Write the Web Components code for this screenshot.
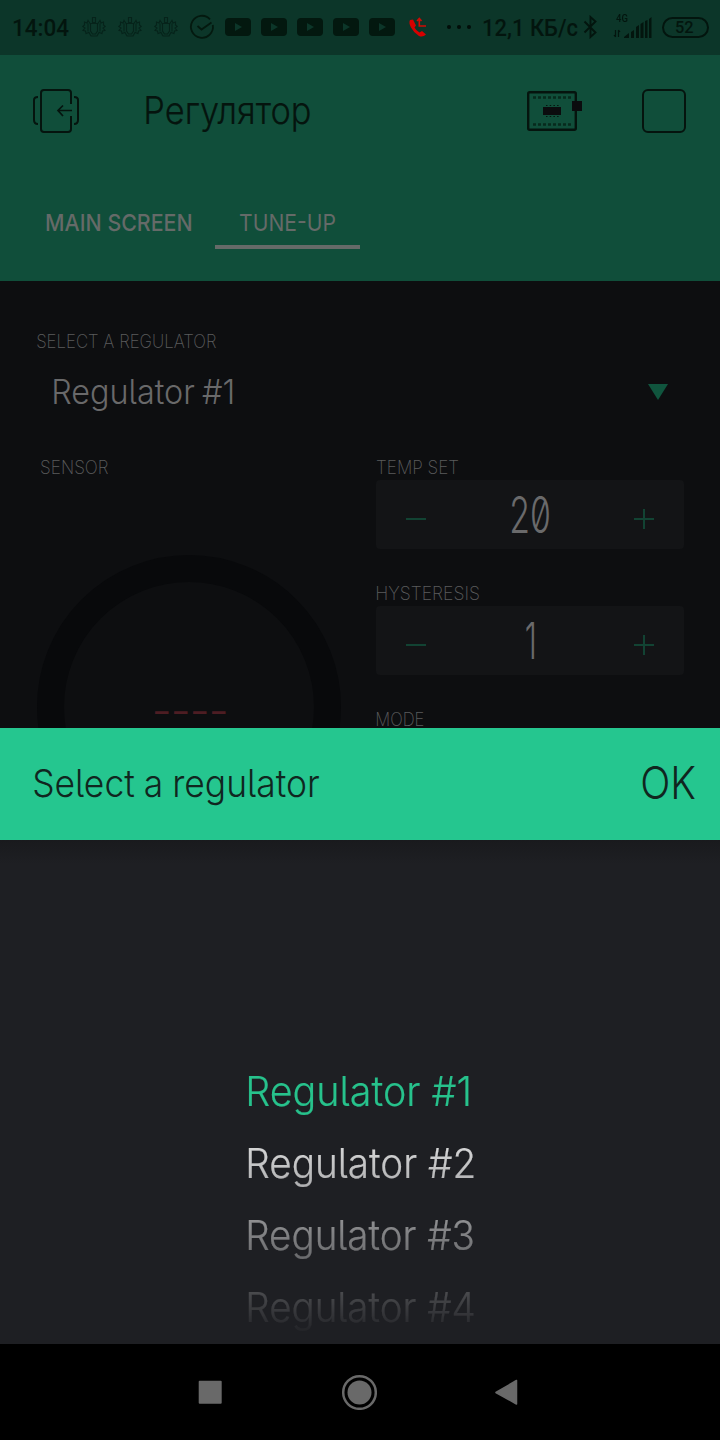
<!DOCTYPE html>
<html lang="en">
<head>
<meta charset="utf-8">
<title>Регулятор</title>
<style>
html,body{margin:0;background:#000}
body{width:720px;height:1440px;overflow:hidden;font-family:Inter,"Noto Sans",sans-serif}
</style>
</head>
<body>
<app-screen></app-screen>
<script>
const define=(name,html,setup)=>customElements.define(name,class extends HTMLElement{
  connectedCallback(){
    if(this.shadowRoot)return;
    const t=document.createElement('template');
    t.innerHTML=html;
    this.attachShadow({mode:'open'}).append(t.content.cloneNode(true));
    if(setup)setup(this,this.shadowRoot);
  }
});

// A single line of text whose visible width equals its w attribute.
const pen=document.createElement('canvas').getContext('2d');
customElements.define('fit-text',class extends HTMLElement{
  connectedCallback(){
    if(this.shadowRoot)return;
    const r=this.attachShadow({mode:'open'});
    r.innerHTML=`<style>:host{display:block;flex:none;white-space:nowrap;line-height:1.2}
    span{display:block;width:max-content;transform-origin:0 50%}</style><span></span>`;
    const s=r.querySelector('span');
    s.textContent=this.getAttribute('text');
    const w=+this.getAttribute('w');
    this.style.width=w+'px';
    const c=getComputedStyle(s);
    pen.font=`${c.fontWeight} ${c.fontSize} ${c.fontFamily}`;
    const m=pen.measureText(s.textContent);
    const lb=-m.actualBoundingBoxLeft,rb=m.width-m.actualBoundingBoxRight;
    const k=w/(s.getBoundingClientRect().width-lb-rb);
    s.style.transform=`translateX(${-lb*k}px) scaleX(${k})`;
  }
});

define('notify-icon',`<style>:host{display:flex;flex:none;width:24px;height:24px;align-items:center;justify-content:center}svg{overflow:visible;flex:none}</style>`,(h,r)=>{
  const art={
    bug:`<svg width="24" height="24" viewBox="0 0 24 24" fill="none" stroke="#06231a" stroke-width="1.1"><path d="M10.500 2.500h3v5h-3zM8.500 8.500h7v7.500l-2 3h-3l-2-3z"/><path d="M8.500 9 6 5.500 5 8 2.500 7v3L.8 11.500 3 13l-2 2.500 2.500.5.5 2.500 3-1 2 3.500h6l2-3.500 3 1 .5-2.500 2.500-.5-2-2.500 2.200-1.500L21.500 10V7L19 8l-1-2.500L15.500 9M6 8.500v8M18 8.500v8"/></svg>`,
    check:`<svg width="24" height="24" viewBox="0 0 24 24" fill="none" stroke="#04190f" stroke-width="1.8"><path d="M20 4.300A11 11 0 1 0 22.800 10M7.500 11l4 3.500L21.500 7.500"/></svg>`,
    video:`<svg width="26" height="18" viewBox="0 0 26 18"><rect width="26" height="18" rx="4" fill="#03180f"/><path d="M10 5v8l7-4z" fill="#0c3629"/></svg>`,
    call:`<svg width="18" height="19" viewBox="0 0 18 19"><path d="M1 2Q-.5 5 2 9.500 5 15 10 18q4 1.500 7-1.500l-4-3.500-2.500 1.500Q7 12.500 5.500 9.500L7 7.500 4 1.500z" fill="#d70000"/><path d="M10.300 1v7H17M8 3l2.300-2.500L12.500 3" fill="none" stroke="#d00b05" stroke-width="1.600"/></svg>`,
    dots:`<svg width="24" height="4" viewBox="0 0 24 4" fill="#020e09"><circle cx="2" cy="2" r="2"/><circle cx="12" cy="2" r="2"/><circle cx="22" cy="2" r="2"/></svg>`};
  r.innerHTML+=art[h.getAttribute('kind')];
});

define('status-bar',`<style>
:host{display:flex;box-sizing:border-box;height:55px;padding:0 11px 1px 13px;align-items:center;background:#0c3629;color:#03150e;font-family:Roboto,sans-serif;font-weight:500;font-size:23px}
.icons{display:flex;gap:12px;margin-left:13px}
.icons notify-icon:last-child{margin-left:5px}
.time,.speed{margin-top:3px}.speed{margin-left:12px}
svg{flex:none;display:block}
.bt{margin-left:5px}
.sig{display:grid;margin-left:15px;width:39px;height:22px}
.sig>*{grid-area:1/1}.sig fit-text{font-size:10px;margin:-3px 0 0 3px}
.bat{margin-left:10px;box-sizing:border-box;width:47px;height:21px;border:2px solid #03150e;border-radius:11px;display:flex;align-items:center;justify-content:center;font-size:17px}
.bat fit-text{margin-left:-1px}
</style>
<fit-text class="time" text="14:04" w="56"></fit-text>
<div class="icons"><notify-icon kind="bug"></notify-icon><notify-icon kind="bug"></notify-icon><notify-icon kind="bug"></notify-icon><notify-icon kind="check"></notify-icon><notify-icon kind="video"></notify-icon><notify-icon kind="video"></notify-icon><notify-icon kind="video"></notify-icon><notify-icon kind="video"></notify-icon><notify-icon kind="video"></notify-icon><notify-icon kind="call"></notify-icon><notify-icon kind="dots"></notify-icon></div>
<fit-text class="speed" text="12,1 КБ/с" w="95"></fit-text>
<svg class="bt" width="15" height="24" viewBox="0 0 15 24" fill="none" stroke="#03150e" stroke-width="1.900"><path d="M1.500 6.500l11 11L7.500 22V2l5 4.500-11 11"/></svg>
<div class="sig"><fit-text text="4G" w="12"></fit-text>
<svg width="39" height="22" viewBox="0 0 39 22"><path d="M2.500 14v7M5.500 21v-7M1 19l1.500 2M7 16l-1.500-2" stroke="#03150e" stroke-width="1.200" fill="none"/><path d="M11 22v-1l5-4v5zM18 22v-6l3-2v8zM23 22V11l3-2v13zM27.500 22V8l3-2v16zM32 22V5l2.500-1v18zM36 22V3l2.500-2v21z" fill="#03150e"/></svg></div>
<div class="bat"><fit-text text="52" w="18"></fit-text></div>`);

define('tab-item',`<style>
:host{display:flex;box-sizing:border-box;height:54px;justify-content:center;align-items:center;padding-top:6px;border-bottom:4px solid transparent;font-size:23.500px;font-weight:500;color:#656a68}
:host([active]){border-color:#656a68;font-weight:400}
</style><slot></slot>`);

define('app-header',`<style>
:host{display:flex;flex-direction:column;box-sizing:border-box;height:226px;background:#104e3a;color:#05140e}
.top{display:flex;align-items:center;height:112px;padding:0 34px 0 33px}
.title{font-size:38.500px;font-weight:300;margin-left:66.500px;margin-top:-1px;-webkit-text-stroke:.2px}
.chip{margin-left:217px}.stop{box-sizing:border-box;width:44px;height:44px;margin-left:59px;border:2px solid #05140e;border-radius:6px}
svg{display:block;flex:none}
.tabs{display:grid;grid-template-columns:193px 145px;margin-top:28px;padding-left:22px}
</style>
<div class="top">
<svg width="46" height="44" viewBox="0 0 46 44" fill="none" stroke="#05140e" stroke-width="2"><path d="M38 15V4q0-3-3-3H11Q8 1 8 4v36q0 3 3 3h24q3 0 3-3V27M5 8Q1 8 1 11v20q0 4 4 4M41 8q4 0 4 3v20q0 4-4 4"/><path stroke-width="1.700" d="M39 21.500H25m5-5-5 5 5 5.500"/></svg>
<fit-text class="title" text="Регулятор" w="164.5"></fit-text>
<svg class="chip" width="56" height="40" viewBox="0 0 56 40"><rect x="1.200" y="1.200" width="47.600" height="37.600" rx="1.500" fill="none" stroke="#05140e" stroke-width="2.400"/><path d="M6 6.500h38M6 33.500h38" stroke="#072a1d" stroke-width="2.600" stroke-dasharray="3 2"/><path d="M16 16h18v8H16zM45 10h10v10H45z" fill="#0b0c0e"/><path d="M19 14.500h13M19 25.500h13" stroke="#05140e" stroke-width="1.200" stroke-dasharray="1.500 2.200"/></svg>
<div class="stop"></div>
</div>
<div class="tabs">
<tab-item><fit-text text="MAIN SCREEN" w="145"></fit-text></tab-item><tab-item active><fit-text text="TUNE-UP" w="95"></fit-text></tab-item></div>`);

define('caption-text',`<style>:host{display:flex;align-items:center;height:26px;font-size:19.300px;font-weight:200;color:#5b5c5d;box-sizing:border-box;padding-top:.2px}::slotted(fit-text){line-height:15px}</style><slot></slot>`);

define('value-stepper',`<style>
:host{display:grid;grid-template-columns:80px 1fr 80px;align-items:center;justify-items:center;width:308px;height:69px;border-radius:4px;background:#131416}
::slotted(fit-text){font-size:50px;font-weight:300;color:#6a6a6b;font-feature-settings:"zero" 1;line-height:60px}
svg{margin-top:9px}</style>
<svg width="20" height="20"><path d="M0 10h20" stroke="#124333" stroke-width="2"/></svg>
<slot></slot>
<svg width="20" height="20"><path d="M0 10h20M10 0v20" stroke="#124333" stroke-width="2"/></svg>`);

define('sensor-gauge',`<style>
:host{display:flex;box-sizing:border-box;width:304px;height:304px;border-radius:50%;border:27px solid #08090b;justify-content:center;align-items:center;color:#4d1d23;font-size:24px;font-weight:700}
fit-text{line-height:14px;margin:9px 0 0 1px}
</style><fit-text text="----" w="72"></fit-text>`);

define('tune-panel',`<style>
:host{display:block;height:447px;overflow:hidden;background:#0d0e10;box-sizing:border-box;padding:47px 36px 0}
.select{display:flex;align-items:center;justify-content:space-between;height:74px;padding:2px 16px 0 17.500px;box-sizing:border-box;font-size:34px;font-weight:300;color:#69696a;word-spacing:-2px;font-feature-settings:"cv05" 1}
.cols{display:grid;grid-template-columns:340px 308px;margin-top:26px}
.left caption-text{margin-left:5px}.left sensor-gauge{margin:75px 0 0 1.400px}
.field{height:126px}.field caption-text,.first{margin-left:1px}
</style>
<caption-text class="first"><fit-text text="SELECT A REGULATOR" w="179.5"></fit-text></caption-text>
<div class="select"><fit-text text="Regulator #1" w="179"></fit-text><svg width="20" height="16"><path d="M0 0h20L10 16z" fill="#10553e"/></svg></div>
<div class="cols"><div class="left"><caption-text><fit-text text="SENSOR" w="67.5"></fit-text></caption-text><sensor-gauge></sensor-gauge></div>
<div><div class="field"><caption-text><fit-text text="TEMP SET" w="81"></fit-text></caption-text><value-stepper><fit-text text="20" w="37"></fit-text></value-stepper></div>
<div class="field"><caption-text><fit-text text="HYSTERESIS" w="102"></fit-text></caption-text><value-stepper><fit-text text="1" w="8"></fit-text></value-stepper></div>
<div class="field"><caption-text><fit-text text="MODE" w="47"></fit-text></caption-text></div></div></div>`);

define('picker-sheet',`<style>
:host{display:flex;flex-direction:column;height:616px;background:#1e1f23;font-weight:300;font-feature-settings:"cv05" 1}
header{display:flex;align-items:center;justify-content:space-between;height:112px;box-sizing:border-box;padding:0 25px 0 33.500px;background:#25c68f;color:#10261f;font-size:38px;word-spacing:-1px}
.ok{font-size:45px;margin-top:-2px}
.body{flex:1;box-sizing:border-box;padding:216px 0 0 248px;background:linear-gradient(#191a1d,#1e1f23 24px)}
.list{height:288px;font-size:41.300px;color:#fff;-webkit-text-stroke:.2px;-webkit-mask-image:linear-gradient(#000000f2 60px,#0000 281px);mask-image:linear-gradient(#000000f2 60px,#0000 281px)}
.row{height:72px;display:flex;align-items:center}
.sel{color:#28cb92}
</style>
<header><fit-text text="Select a regulator" w="285"></fit-text><fit-text class="ok" text="OK" w="53"></fit-text></header>
<div class="body"><div class="list"><div class="row sel"><fit-text text="Regulator #1" w="221"></fit-text></div><div class="row"><fit-text text="Regulator #2" w="226"></fit-text></div><div class="row"><fit-text text="Regulator #3" w="225"></fit-text></div><div class="row"><fit-text text="Regulator #4" w="226"></fit-text></div></div></div>`);

define('nav-bar',`<style>
:host{display:flex;align-items:center;height:96px;box-sizing:border-box;padding:0 0 0 198px;background:#000}
svg{display:block;flex:none}
</style>
<svg width="24" height="24"><rect x=".7" y=".7" width="23" height="23" rx="1" fill="#696969"/></svg>
<svg width="36" height="36" style="margin-left:119px"><circle cx="18.500" cy="18.500" r="16.300" fill="none" stroke="#696969" stroke-width="2.500"/><circle cx="18.500" cy="18.500" r="12" fill="#696969"/></svg>
<svg width="23" height="26" style="margin-left:117.500px"><path d="M.9 13.500 21.500 1.500v23.500z" fill="#696969" stroke="#696969" stroke-width="1.500" stroke-linejoin="round"/></svg>`);

define('app-screen',`<style>:host{display:flex;flex-direction:column;width:720px;height:1440px}</style>
<status-bar></status-bar><app-header></app-header><tune-panel></tune-panel><picker-sheet></picker-sheet><nav-bar></nav-bar>`);
</script>
</body>
</html>
